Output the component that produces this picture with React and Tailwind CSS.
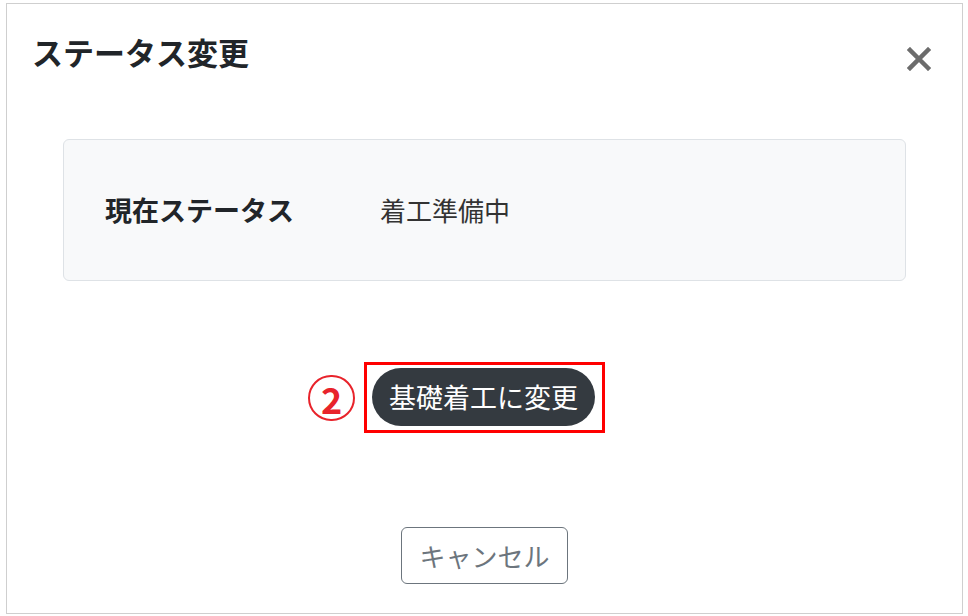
import React from 'react'

const font = { fontFamily: '"Noto Sans CJK JP", "Noto Sans", sans-serif' }

export default function App() {
  return (
    <div className="bg-white w-[968px] h-[616px] pt-[3px] pl-[6px]" style={font}>
      <div className="w-[957px] h-[611px] border border-[#cfcfcf] flex flex-col">
        {/* header */}
        <div className="flex justify-between items-start pt-[33px] pl-[25px] pr-[31px]">
          <h2 className="text-[31px] leading-[30px] font-bold text-[#212529]">ステータス変更</h2>
          <button className="mt-[10px] text-[#6c6c6c]">
            <svg width="24" height="24" viewBox="0 0 24 24">
              <path d="M3 3 L21 21 M21 3 L3 21" stroke="currentColor" strokeWidth="4.5" strokeLinecap="square" />
            </svg>
          </button>
        </div>

        {/* current status */}
        <div className="mt-[68px] ml-[56px] mr-[56px] h-[142px] bg-[#f8f9fa] border border-[#dee2e6] rounded-[6px] flex items-center pl-[41px]">
          <div className="w-[275px] text-[27px] leading-[30px] font-bold text-[#212529]">現在ステータス</div>
          <div className="text-[26px] leading-[30px] text-[#333]">着工準備中</div>
        </div>

        {/* action */}
        <div className="mt-[81px] flex justify-center">
          <div className="relative border-[3px] border-[#ff0000] pl-[5px] pr-[7px] pt-[3px] pb-[4px]">
            <div className="absolute right-full top-[10px] mr-[12px] w-[47px] h-[46px] rounded-full border-2 border-[#e8232b] flex items-center justify-center">
              <span className="text-[36px] leading-none font-bold text-[#e8232b]">2</span>
            </div>
            <button className="h-[58px] px-[17px] rounded-full bg-[#343a40] text-white text-[27px] leading-[30px]">
              基礎着工に変更
            </button>
          </div>
        </div>

        {/* cancel */}
        <div className="mt-[94px] flex justify-center">
          <button className="w-[167px] h-[57px] border border-[#6c757d] rounded-[6px] text-[#6c757d] text-[26px] leading-[30px]">
            キャンセル
          </button>
        </div>
      </div>
    </div>
  )
}
